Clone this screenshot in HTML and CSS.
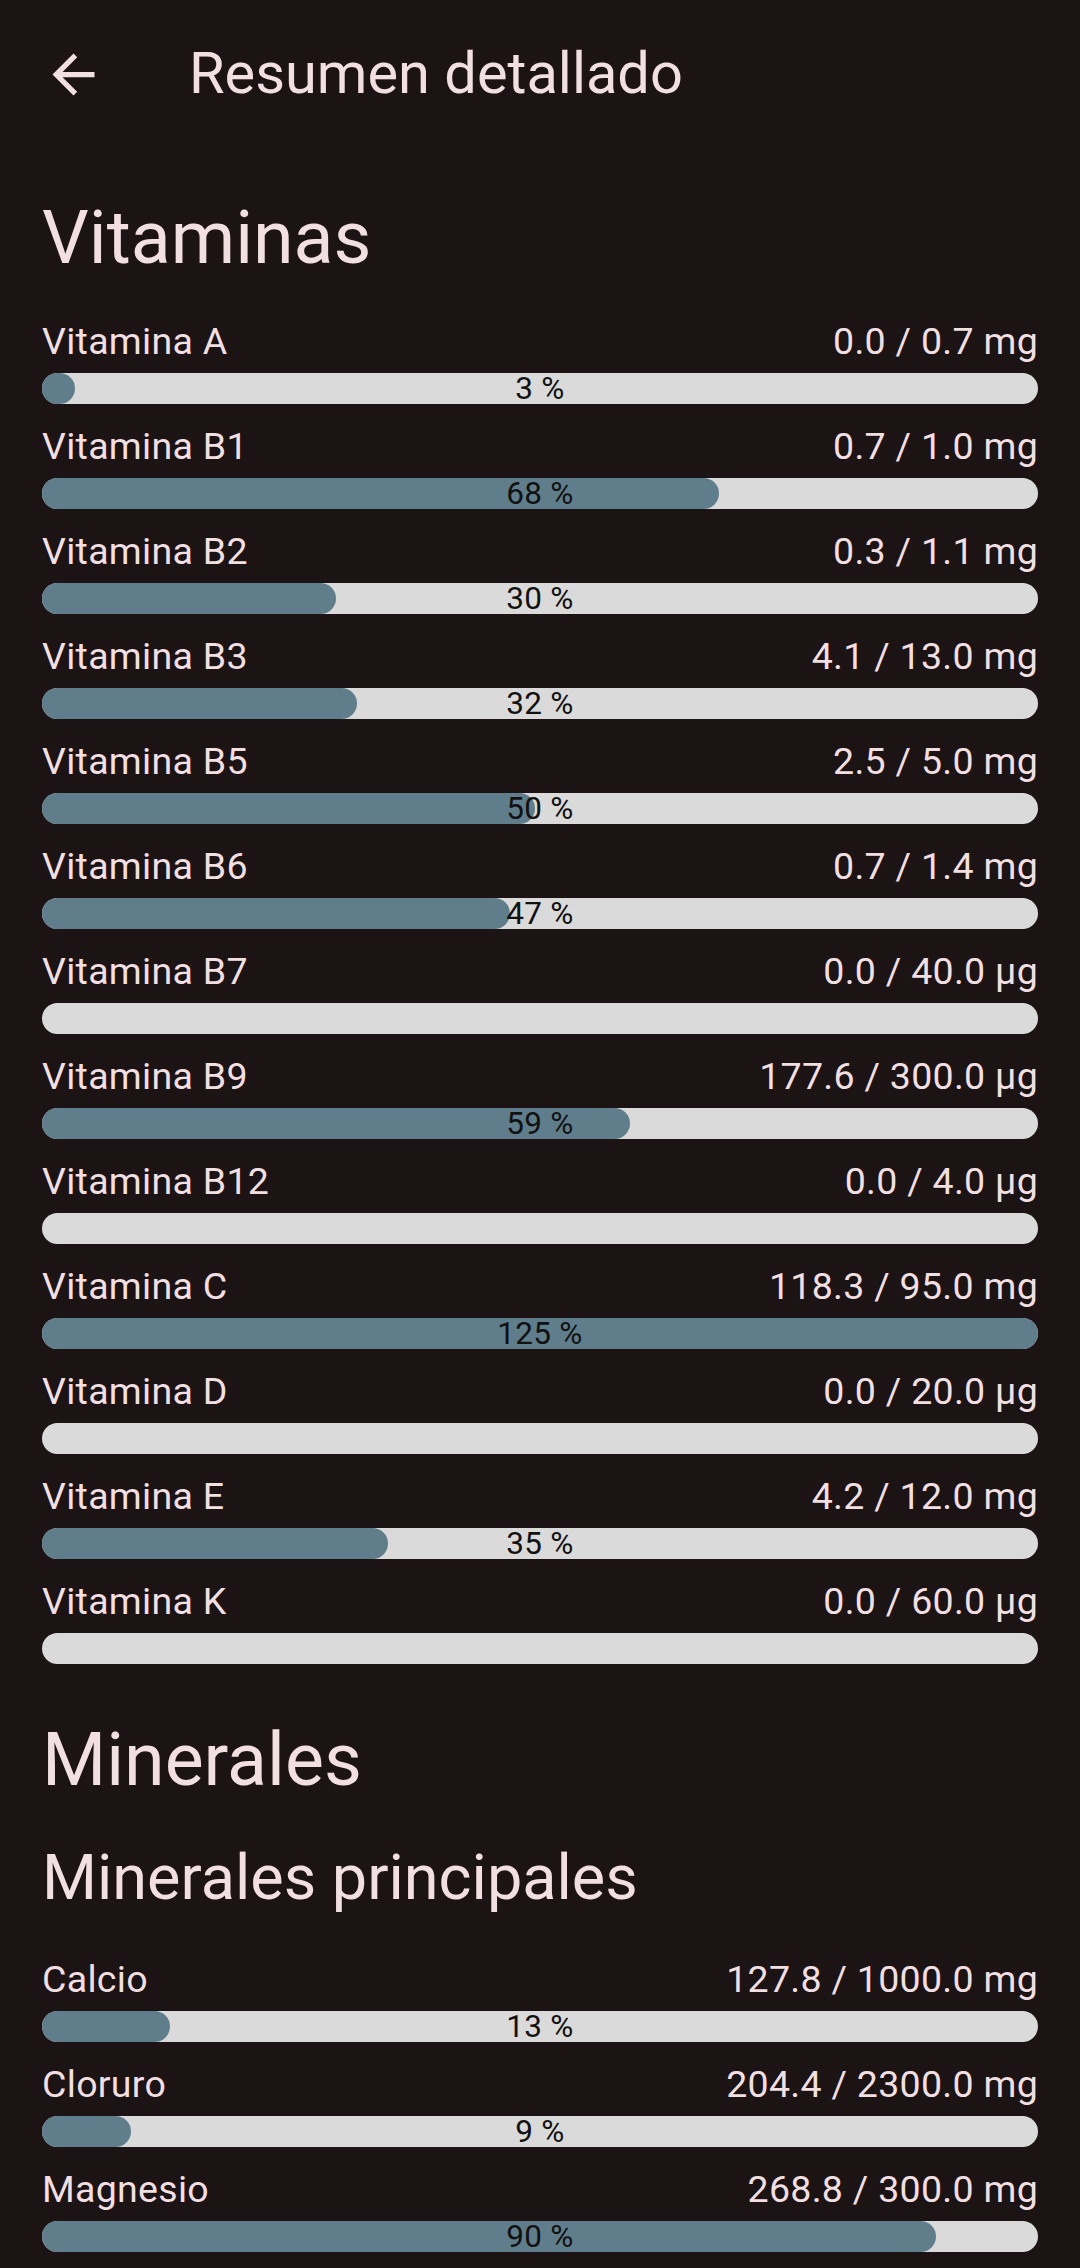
FILE: index.html
```html
<!DOCTYPE html>
<html lang="es">
<head>
<meta charset="utf-8">
<title>Resumen detallado</title>
<link rel="stylesheet" href="styles.css">
</head>
<body>
<header class="appbar">
  <button class="back" aria-label="Atrás">
    <svg viewBox="0 0 24 24" width="63" height="63"><path d="M20 11H7.83l5.59-5.59L12 4l-8 8 8 8 1.41-1.41L7.83 13H20v-2z" fill="currentColor"/></svg>
  </button>
  <h1 class="title">Resumen detallado</h1>
</header>

<main class="content">
  <h2 class="section-title">Vitaminas</h2>
  <div class="list">
    <div class="row"><div class="row-head"><span>Vitamina A</span><span>0.0 / 0.7 mg</span></div><div class="bar"><div class="fill" style="width:3%"></div><span class="pct">3 %</span></div></div>
    <div class="row"><div class="row-head"><span>Vitamina B1</span><span>0.7 / 1.0 mg</span></div><div class="bar"><div class="fill" style="width:68%"></div><span class="pct">68 %</span></div></div>
    <div class="row"><div class="row-head"><span>Vitamina B2</span><span>0.3 / 1.1 mg</span></div><div class="bar"><div class="fill" style="width:29.5%"></div><span class="pct">30 %</span></div></div>
    <div class="row"><div class="row-head"><span>Vitamina B3</span><span>4.1 / 13.0 mg</span></div><div class="bar"><div class="fill" style="width:31.6%"></div><span class="pct">32 %</span></div></div>
    <div class="row"><div class="row-head"><span>Vitamina B5</span><span>2.5 / 5.0 mg</span></div><div class="bar"><div class="fill" style="width:49.5%"></div><span class="pct">50 %</span></div></div>
    <div class="row"><div class="row-head"><span>Vitamina B6</span><span>0.7 / 1.4 mg</span></div><div class="bar"><div class="fill" style="width:47%"></div><span class="pct">47 %</span></div></div>
    <div class="row"><div class="row-head"><span>Vitamina B7</span><span>0.0 / 40.0 µg</span></div><div class="bar"></div></div>
    <div class="row"><div class="row-head"><span>Vitamina B9</span><span>177.6 / 300.0 µg</span></div><div class="bar"><div class="fill" style="width:59%"></div><span class="pct">59 %</span></div></div>
    <div class="row"><div class="row-head"><span>Vitamina B12</span><span>0.0 / 4.0 µg</span></div><div class="bar"></div></div>
    <div class="row"><div class="row-head"><span>Vitamina C</span><span>118.3 / 95.0 mg</span></div><div class="bar"><div class="fill" style="width:100%"></div><span class="pct">125 %</span></div></div>
    <div class="row"><div class="row-head"><span>Vitamina D</span><span>0.0 / 20.0 µg</span></div><div class="bar"></div></div>
    <div class="row"><div class="row-head"><span>Vitamina E</span><span>4.2 / 12.0 mg</span></div><div class="bar"><div class="fill" style="width:34.7%"></div><span class="pct">35 %</span></div></div>
    <div class="row"><div class="row-head"><span>Vitamina K</span><span>0.0 / 60.0 µg</span></div><div class="bar"></div></div>
  </div>

  <h2 class="section-title minerals">Minerales</h2>
  <h3 class="sub-title">Minerales principales</h3>
  <div class="list">
    <div class="row"><div class="row-head"><span>Calcio</span><span>127.8 / 1000.0 mg</span></div><div class="bar"><div class="fill" style="width:12.9%"></div><span class="pct">13 %</span></div></div>
    <div class="row"><div class="row-head"><span>Cloruro</span><span>204.4 / 2300.0 mg</span></div><div class="bar"><div class="fill" style="width:8.9%"></div><span class="pct">9 %</span></div></div>
    <div class="row"><div class="row-head"><span>Magnesio</span><span>268.8 / 300.0 mg</span></div><div class="bar"><div class="fill" style="width:89.8%"></div><span class="pct">90 %</span></div></div>
  </div>
</main>
</body>
</html>
```

FILE: styles.css
```css
html, body {
  margin: 0;
  padding: 0;
  background: #1b1314;
}

body {
  font-family: Roboto, "Noto Sans", "Liberation Sans", sans-serif;
  color: #f1dfe1;
  overflow: hidden;
}

.appbar {
  height: 148px;
  display: flex;
  align-items: center;
}

.back {
  width: 126px;
  height: 126px;
  margin-left: 10px;
  margin-right: 53px;
  padding: 0;
  border: 0;
  background: none;
  color: #f1dfe1;
  display: flex;
  align-items: center;
  justify-content: center;
}

.title {
  margin: -3px 0 0 0;
  font-size: 57.75px;
  font-weight: 400;
  line-height: 68px;
}

.content {
  padding: 46px 42px 0 42px;
}

.section-title {
  margin: 0 0 37px 0;
  font-size: 73.5px;
  font-weight: 400;
  line-height: 88px;
}

.section-title.minerals {
  margin-top: 32px;
  margin-bottom: 36px;
}

.sub-title {
  margin: 0 0 41px 0;
  font-size: 63px;
  font-weight: 400;
  line-height: 76px;
}

.list {
  display: flex;
  flex-direction: column;
}

.row {
  display: flex;
  flex-direction: column;
  gap: 10px;
  padding-bottom: 20px;
}

.row-head {
  display: flex;
  justify-content: space-between;
  font-size: 37.5px;
  line-height: 44px;
  letter-spacing: 0.3px;
}

.bar {
  position: relative;
  height: 31px;
  border-radius: 16px;
  background: #dadada;
  display: flex;
  align-items: center;
  justify-content: center;
}

.fill {
  position: absolute;
  left: 0;
  top: 0;
  bottom: 0;
  min-width: 33px;
  border-radius: 16px;
  background: #607d8b;
}

.pct {
  position: relative;
  font-size: 31.5px;
  line-height: 1;
  color: #111;
  letter-spacing: 0.3px;
}
```
